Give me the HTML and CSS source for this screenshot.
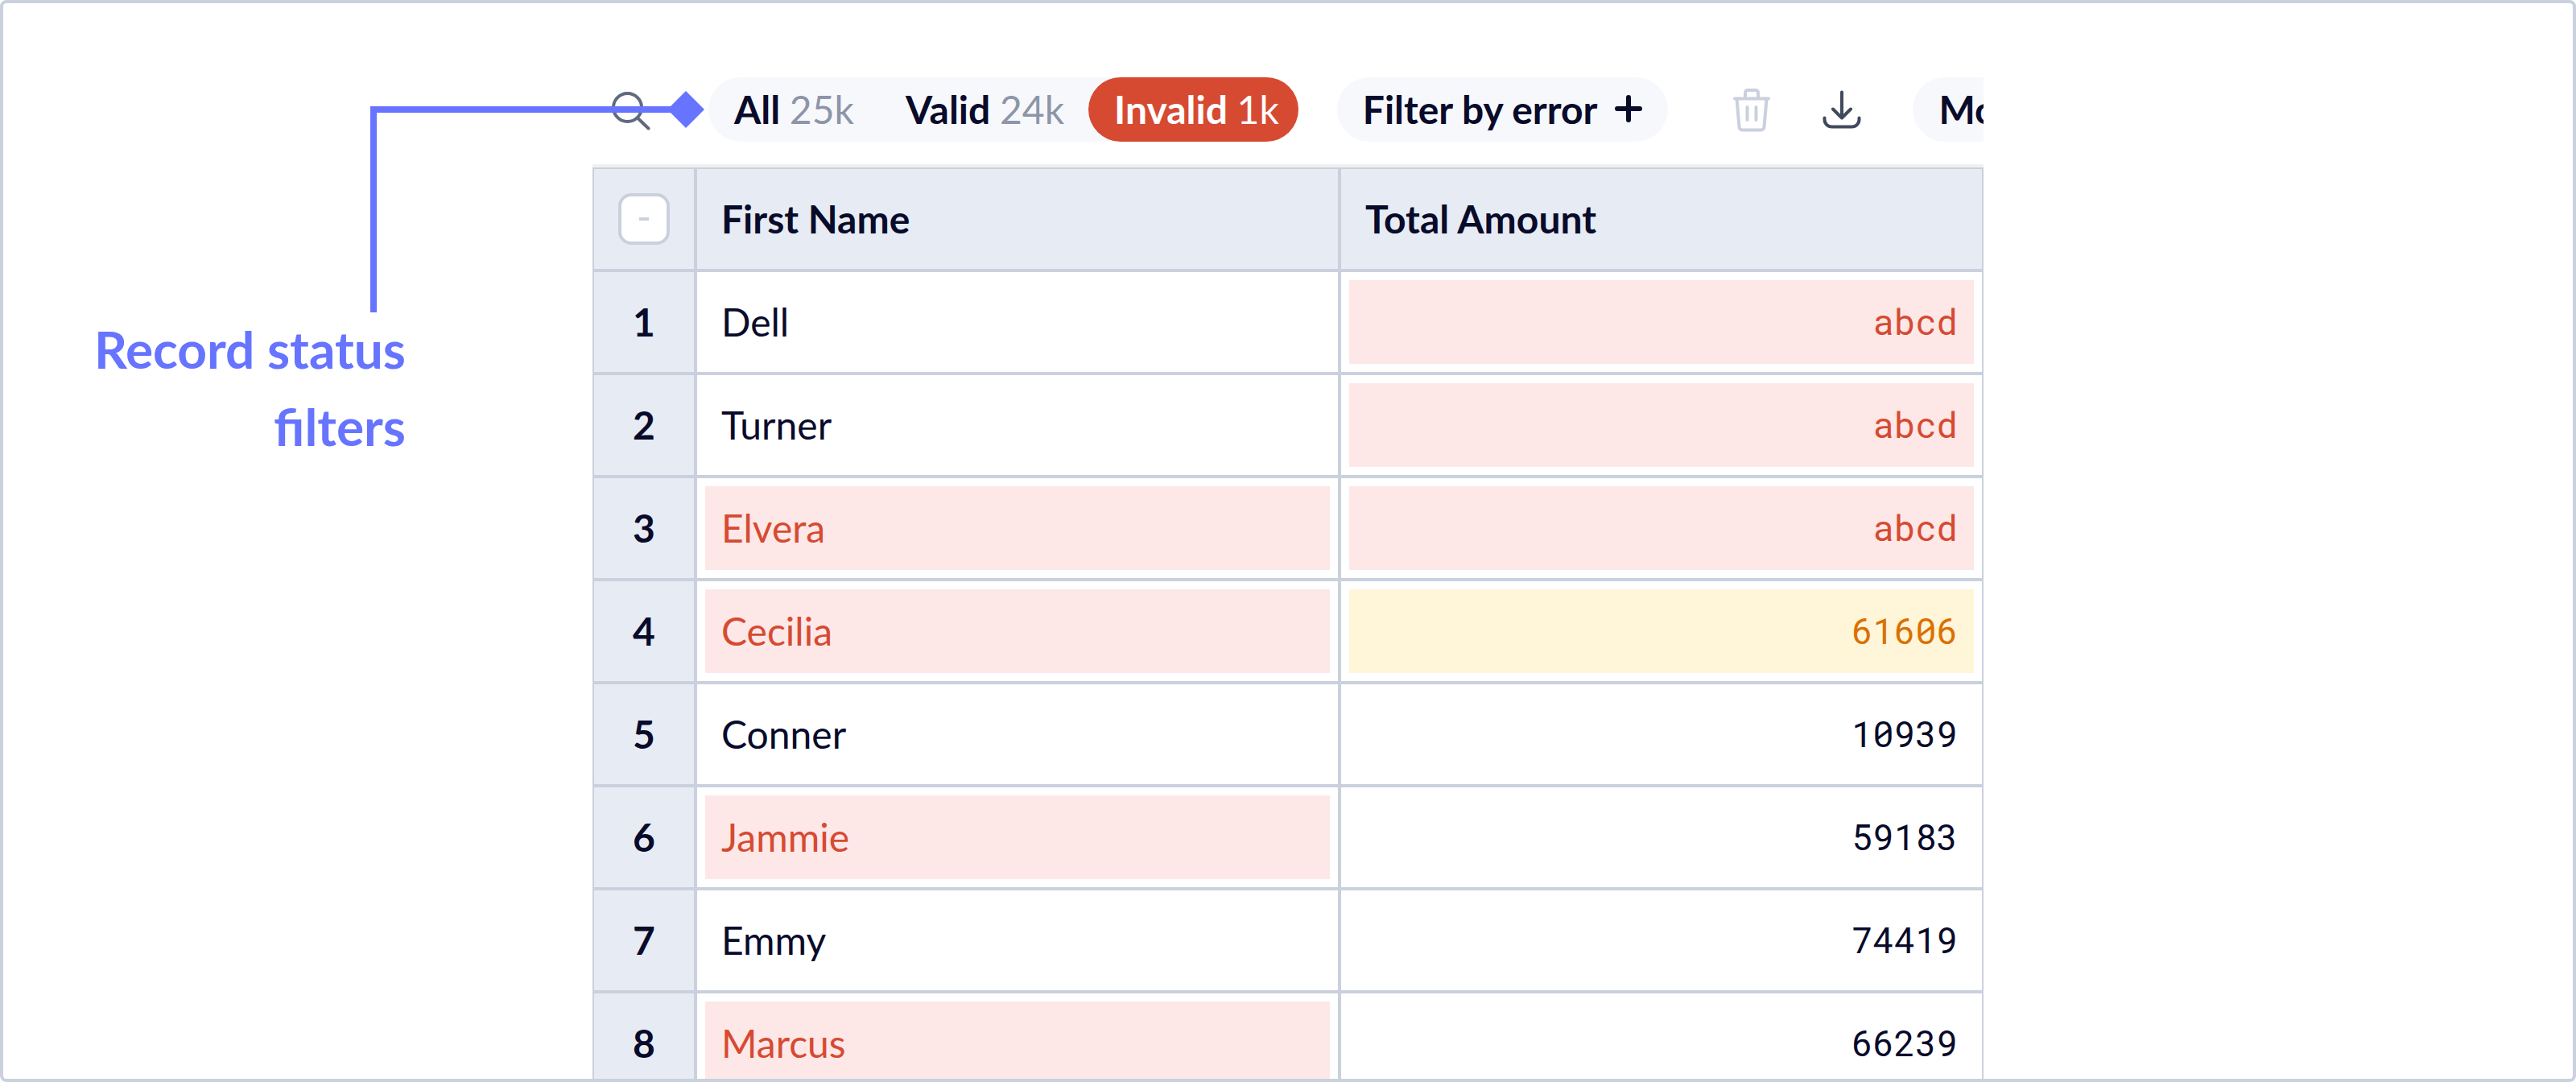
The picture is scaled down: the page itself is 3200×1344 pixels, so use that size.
FILE: index.html
```html
<!DOCTYPE html>
<html lang="en">
<head>
<meta charset="utf-8">
<meta name="viewport" content="width=device-width, initial-scale=1">
<title>Record status filters</title>
<link rel="stylesheet" href="styles.css">
</head>
<body>
<main class="frame">
  <aside class="callout">
    <p class="callout-text">Record status<br>filters</p>
    <svg class="connector" viewBox="0 0 416 288" aria-hidden="true">
      <path d="M4 280V28H392" fill="none" stroke="currentColor" stroke-width="8"/>
      <path d="M392 5l23 23-23 23-23-23z" fill="currentColor"/>
    </svg>
  </aside>

  <section class="panel">
    <div class="toolbar">
      <button class="icon-button search" type="button" aria-label="Search">
        <svg viewBox="0 0 48 56"><circle cx="19.5" cy="25.5" r="17.5"/><path d="M32 38.500L45.500 51.500"/></svg>
      </button>
      <div class="segments" role="group" aria-label="Record status">
        <button class="segment" type="button">All <span class="count">25k</span></button>
        <button class="segment" type="button">Valid <span class="count">24k</span></button>
        <button class="segment active" type="button" aria-pressed="true">Invalid <span class="count">1k</span></button>
      </div>
      <button class="pill" type="button">Filter by error
        <svg class="plus" viewBox="0 0 34 34"><path d="M17 3v28M3 17h28"/></svg>
      </button>
      <div class="actions">
        <button class="icon-button trash" type="button" aria-label="Delete" disabled>
          <svg viewBox="0 0 48 56"><path d="M3 14.500H45M16 14V7a3 3 0 0 1 3-3h10a3 3 0 0 1 3 3v7M5.500 15l3 34.500a4 4 0 0 0 4 4h23a4 4 0 0 0 4-4l3-34.500M18.500 25v16M29.500 25v16"/></svg>
        </button>
        <button class="icon-button download" type="button" aria-label="Download">
          <svg viewBox="0 0 48 56"><path d="M24 6.500V38M13 27.500L24 38.500L35 27.500M2.500 38.500v2a9 9 0 0 0 9 9h25a9 9 0 0 0 9-9v-2"/></svg>
        </button>
        <button class="pill" type="button">More</button>
      </div>
    </div>

    <table class="records">
      <thead>
        <tr>
          <th class="index"><input class="select-all" type="checkbox" aria-label="Select all records"></th>
          <th><div class="cell">First Name</div></th>
          <th><div class="cell">Total Amount</div></th>
        </tr>
      </thead>
      <tbody>
        <tr><th class="index"><div class="cell">1</div></th><td><div class="cell">Dell</div></td><td><div class="cell amount error">abcd</div></td></tr>
        <tr><th class="index"><div class="cell">2</div></th><td><div class="cell">Turner</div></td><td><div class="cell amount error">abcd</div></td></tr>
        <tr><th class="index"><div class="cell">3</div></th><td><div class="cell error">Elvera</div></td><td><div class="cell amount error">abcd</div></td></tr>
        <tr><th class="index"><div class="cell">4</div></th><td><div class="cell error">Cecilia</div></td><td><div class="cell amount warning">61606</div></td></tr>
        <tr><th class="index"><div class="cell">5</div></th><td><div class="cell">Conner</div></td><td><div class="cell amount">10939</div></td></tr>
        <tr><th class="index"><div class="cell">6</div></th><td><div class="cell error">Jammie</div></td><td><div class="cell amount">59183</div></td></tr>
        <tr><th class="index"><div class="cell">7</div></th><td><div class="cell">Emmy</div></td><td><div class="cell amount">74419</div></td></tr>
        <tr><th class="index"><div class="cell">8</div></th><td><div class="cell error">Marcus</div></td><td><div class="cell amount">66239</div></td></tr>
      </tbody>
    </table>
  </section>
</main>
</body>
</html>
```
FILE: styles.css
```css
:root {
  --ink: #090b2b;
  --line: #cad0dd;
  --head: #e7ebf3;
  --soft: #f7f8fc;
  --red: #d64a32;
  --indigo: #6674ff;
}

* {
  box-sizing: border-box;
}

body {
  margin: 0;
  background: #fff;
  color: var(--ink);
  font-family: Lato, "Open Sans", sans-serif;
  font-size: 48px;
}

.frame {
  display: grid;
  grid-template-columns: minmax(0, 61fr) minmax(0, 144fr) minmax(0, 61fr);
  height: 100vh;
  overflow: hidden;
  border: 4px solid var(--line);
  border-radius: 8px;
}

/* Callout label and its connector line */
.callout {
  position: relative;
  z-index: 1;
  padding: 382px 232px 0 0;
  color: var(--indigo);
}

.callout-text {
  margin: 0;
  font-size: 64px;
  font-weight: 700;
  line-height: 96px;
  text-align: right;
  white-space: nowrap;
}

.connector {
  position: absolute;
  top: 104px;
  right: -140px;
  width: 416px;
  height: 288px;
}

.panel {
  padding-top: 92px;
}

/* Toolbar */
.toolbar {
  display: flex;
  height: 108px;
  padding: 0 0 28px 24px;
  overflow: hidden;
}

button {
  flex: none;
  margin: 0;
  border: 0;
  background: none;
  color: inherit;
  font: inherit;
  white-space: nowrap;
}

.icon-button {
  display: grid;
  align-items: center;
  width: 48px;
  padding: 0;
}

.icon-button svg {
  width: 48px;
  height: 56px;
}

svg {
  fill: none;
  stroke: currentColor;
  stroke-width: 4;
  stroke-linecap: round;
  stroke-linejoin: round;
}

.connector {
  stroke: none;
  stroke-linecap: butt;
  stroke-linejoin: miter;
}

.search {
  margin-right: 72px;
  color: #606a7e;
}

.trash {
  color: var(--line);
}

.download {
  color: #414a5c;
}

.segments {
  display: flex;
  flex: none;
  margin-right: 48px;
  border-radius: 40px;
  background: var(--soft);
}

.segment,
.pill {
  padding: 0 32px 2px;
  border-radius: 40px;
  font-weight: 700;
}

.count {
  color: #8d95a7;
  font-weight: 400;
}

.active,
.active .count {
  background: var(--red);
  color: #fff;
}

.segment.active {
  margin-left: -2px;
  padding-right: 24px;
}

.pill {
  display: flex;
  align-items: center;
  gap: 22px;
  background: var(--soft);
}

.plus {
  width: 34px;
  height: 34px;
  stroke-width: 6;
}

.actions {
  display: flex;
  flex: none;
  gap: 64px;
  margin-left: 80px;
}

/* Records table */
.records {
  width: 100%;
  table-layout: fixed;
  border: 2px solid var(--line);
  border-spacing: 0;
  box-shadow: 0 -4px #f0f0f0;
  margin-top: 4px;
}

th,
td {
  height: 128px;
  padding: 10px;
  border-bottom: 4px solid var(--line);
  border-left: 4px solid var(--line);
  text-align: left;
}

th {
  background: var(--head);
  font-weight: 700;
}

.index {
  width: 124px;
  border-left: 0;
  text-align: center;
}

.index .cell {
  justify-content: center;
}

.cell {
  display: flex;
  align-items: center;
  height: 104px;
  padding: 0 20px 2px;
}

.amount {
  justify-content: flex-end;
  font-family: "Roboto Mono", "Liberation Mono", monospace;
  font-size: 44px;
}

.error {
  background: #fde8e7;
  color: var(--red);
}

.warning {
  background: #fff5d9;
  color: #da7000;
}

.select-all {
  display: block;
  width: 64px;
  height: 64px;
  margin: 0 auto;
  appearance: none;
  border: 4px solid var(--line);
  border-radius: 16px;
  background: #fff linear-gradient(var(--line), var(--line)) center / 12px 4px no-repeat;
}
```
